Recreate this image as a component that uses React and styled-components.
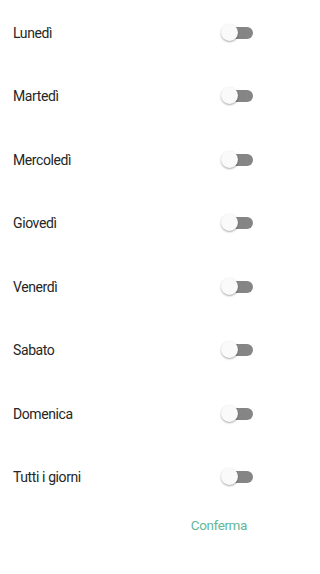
import React, { useState } from 'react'
import styled, { createGlobalStyle } from 'styled-components'

const Global = createGlobalStyle`
  body {
    margin: 0;
    background: #ffffff;
    font-family: Roboto, "Liberation Sans", sans-serif;
  }
`

const Page = styled.div`
  width: 265px;
  height: 574px;
  display: flex;
  flex-direction: column;
  padding-top: 1px;
  box-sizing: border-box;
`

const Row = styled.div`
  height: 63.5px;
  flex-shrink: 0;
  display: flex;
  align-items: center;
  justify-content: space-between;
  padding: 0 12px 0 13px;
`

const Label = styled.span`
  font-size: 14px;
  letter-spacing: -0.4px;
  color: #262626;
`

const Switch = styled.button`
  position: relative;
  width: 32px;
  height: 18px;
  padding: 0;
  border: none;
  background: transparent;
  cursor: pointer;
`

const Track = styled.span`
  position: absolute;
  left: 9px;
  top: 3px;
  width: 23px;
  height: 12px;
  border-radius: 6px;
  background: ${p => (p.$on ? '#9fd3bf' : '#858585')};
`

const Knob = styled.span`
  position: absolute;
  top: 0;
  left: ${p => (p.$on ? '15px' : '0')};
  width: 17px;
  height: 17px;
  border-radius: 50%;
  background: ${p => (p.$on ? '#5fb89a' : '#fafafa')};
  box-shadow: 0 1px 2px rgba(0, 0, 0, 0.35);
`

const Footer = styled.div`
  display: flex;
  justify-content: flex-end;
  padding: 4px 18px 0 0;
`

const Confirm = styled.button`
  border: none;
  background: transparent;
  font-family: inherit;
  font-size: 13.5px;
  letter-spacing: -0.4px;
  color: #63b899;
  padding: 4px 0;
  cursor: pointer;
`

const days = ['Lunedì', 'Martedì', 'Mercoledì', 'Giovedì', 'Venerdì', 'Sabato', 'Domenica', 'Tutti i giorni']

export default function App() {
  const [on, setOn] = useState({})
  return (
    <Page>
      <Global />
      {days.map(d => (
        <Row key={d}>
          <Label>{d}</Label>
          <Switch onClick={() => setOn({ ...on, [d]: !on[d] })}>
            <Track $on={on[d]} />
            <Knob $on={on[d]} />
          </Switch>
        </Row>
      ))}
      <Footer>
        <Confirm>Conferma</Confirm>
      </Footer>
    </Page>
  )
}
